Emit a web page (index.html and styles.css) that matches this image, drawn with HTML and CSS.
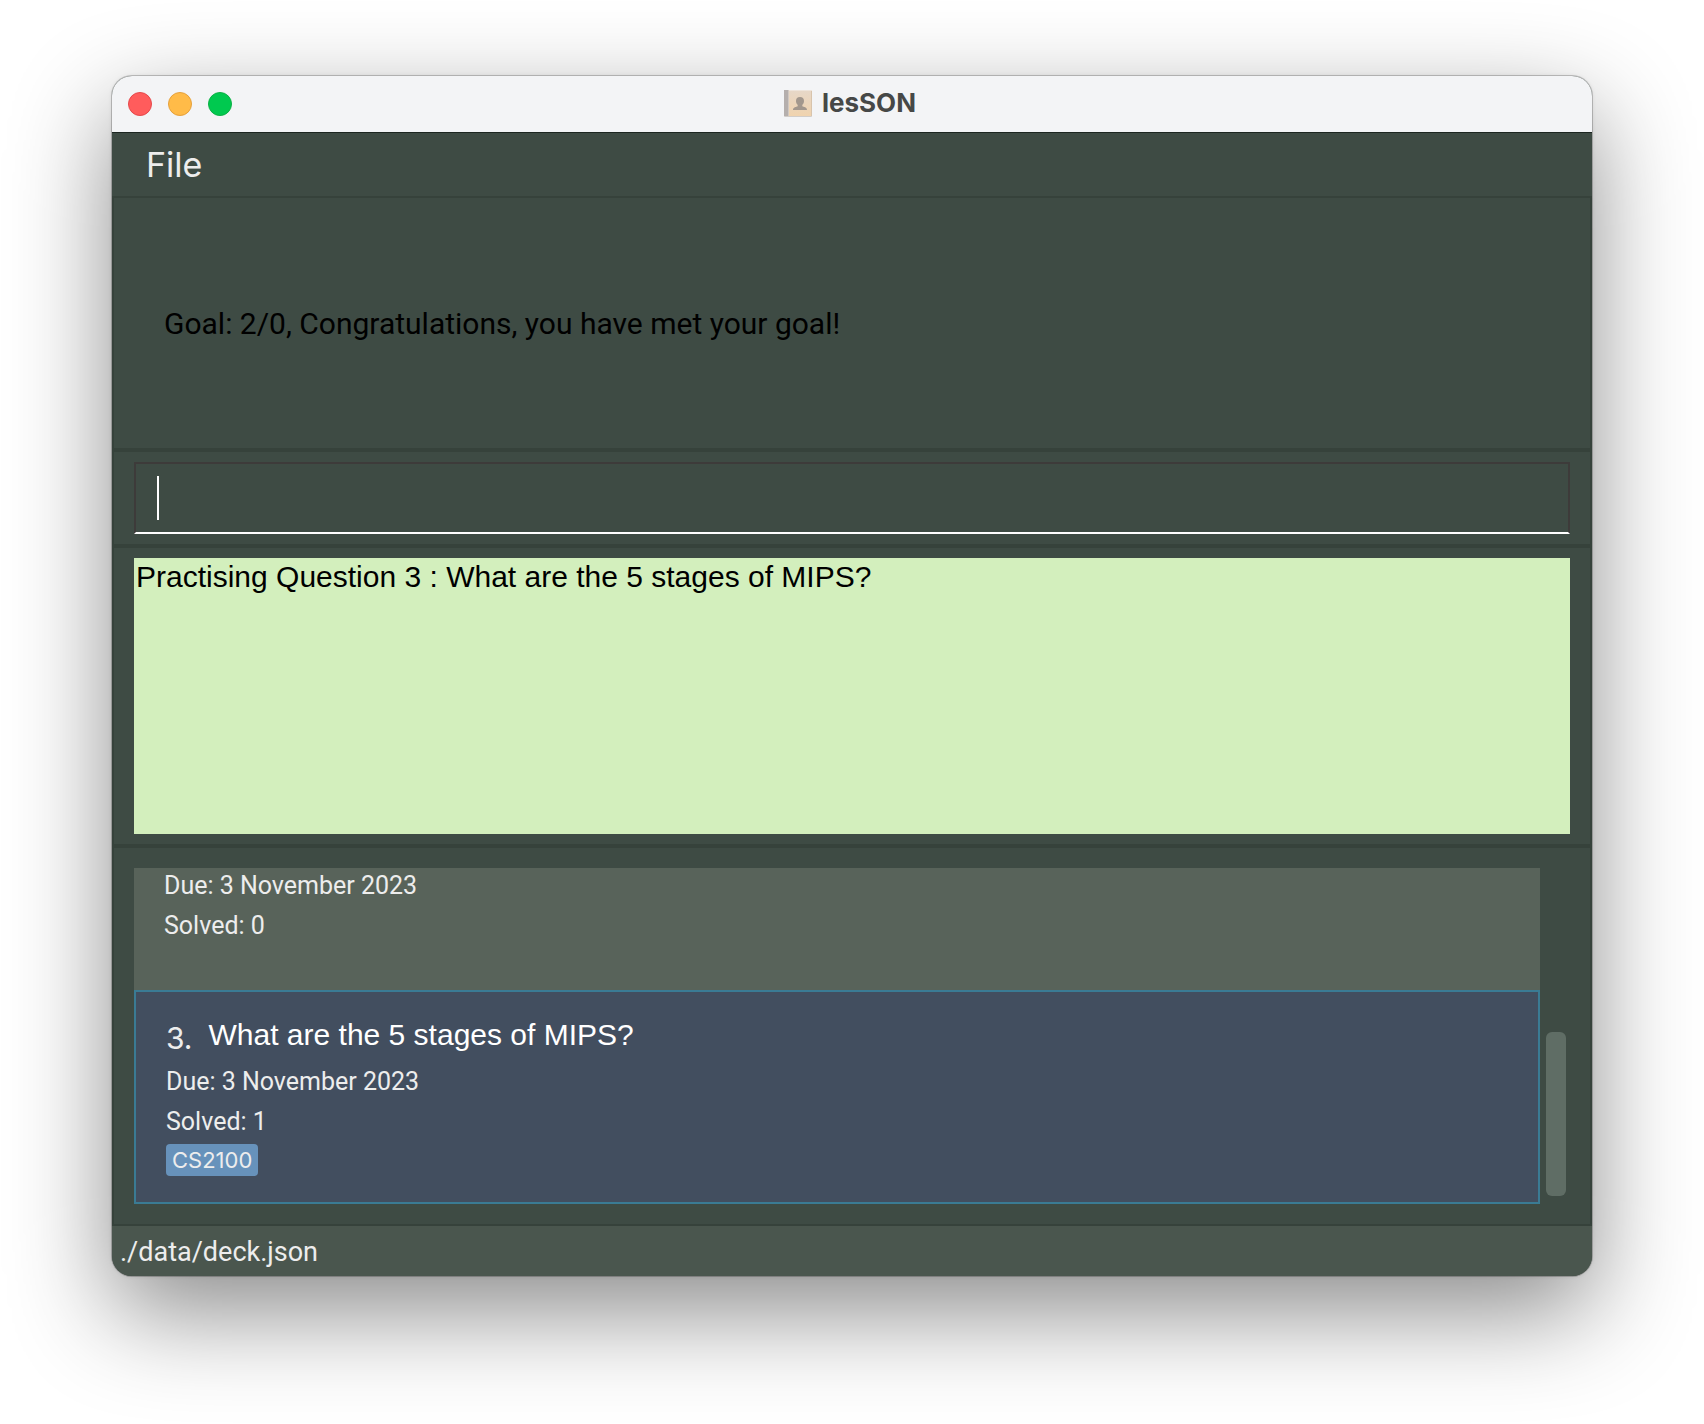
FILE: index.html
```html
<!DOCTYPE html>
<html lang="en">
<head>
<meta charset="utf-8">
<meta name="viewport" content="width=device-width, initial-scale=1">
<title>lesSON</title>
<link rel="stylesheet" href="styles.css">
</head>
<body>
<div class="window">
  <header class="titlebar">
    <div class="lights">
      <button class="light light-close" type="button" aria-label="Close"></button>
      <button class="light light-minimize" type="button" aria-label="Minimize"></button>
      <button class="light light-zoom" type="button" aria-label="Zoom"></button>
    </div>
    <h1 class="title">
      <svg class="title-icon" width="30" height="28" viewBox="0 0 30 28" aria-hidden="true">
        <defs>
          <linearGradient id="cover" x1="0" y1="0" x2="0" y2="1">
            <stop offset="0" stop-color="#e6d7c8"/>
            <stop offset="1" stop-color="#f0d3ae"/>
          </linearGradient>
        </defs>
        <rect x="0" y="2" width="28" height="26" rx="1" fill="#d2cdc8"/>
        <rect x="0" y="1" width="28" height="26" rx="1" fill="url(#cover)"/>
        <rect x="0" y="1" width="4" height="26" fill="#b5afad"/>
        <rect x="4" y="1" width="1" height="26" fill="#d0c8c2"/>
        <path d="M5 1.500H28" stroke="#eee4da"/>
        <path d="M27.500 2V27" stroke="#d8c4ac"/>
        <path d="M16 8c-2.700 0-4 1.600-4 3.900 0 1.900.7 3 1.700 3.900v1.400c-1.400.7-4.700.9-4.700 3.800h14c0-2.900-3.300-3.100-4.700-3.800v-1.400c1-.9 1.700-2 1.700-3.900C20 9.600 18.700 8 16 8z" fill="#a2978d"/>
      </svg>
      <span>lesSON</span>
    </h1>
  </header>
  <nav class="menubar"><button class="menu" type="button">File</button></nav>
  <main class="content">
    <section class="goal"><p>Goal: 2/0, Congratulations, you have met your goal!</p></section>
    <section class="panel command">
      <input class="command-input" type="text" aria-label="Command">
      <span class="caret"></span>
    </section>
    <section class="panel result">
      <textarea class="result-text" aria-label="Result" readonly>Practising Question 3 : What are the 5 stages of MIPS?</textarea>
    </section>
    <section class="deck">
      <ul class="cards">
        <li class="card card-scrolled">
          <p class="detail">Due: 3 November 2023</p>
          <p class="detail">Solved: 0</p>
        </li>
        <li class="card card-selected">
          <div class="question"><span class="index">3.</span><h2 class="question-text">What are the 5 stages of MIPS?</h2></div>
          <p class="detail">Due: 3 November 2023</p>
          <p class="detail">Solved: 1</p>
          <span class="tag">CS2100</span>
        </li>
      </ul>
      <div class="scrollbar"><div class="thumb"></div></div>
    </section>
  </main>
  <footer class="status">./data/deck.json</footer>
</div>
</body>
</html>
```
FILE: styles.css
```css
* { box-sizing: border-box; }

body {
  display: flex;
  min-height: 100vh;
  margin: 0;
  padding: 76px 112px 148px;
  background: #fff;
  color: #ededed;
  font-family: Roboto, "Liberation Sans", sans-serif;
}

h1, h2, p, ul { margin: 0; padding: 0; font-weight: 400; }

.window {
  display: flex;
  flex: 1;
  flex-direction: column;
  min-width: 0;
  overflow: hidden;
  border-radius: 20px;
  background: #3e4b44;
  box-shadow: 0 0 0 1px rgba(0, 0, 0, .2), 0 0 4px rgba(0, 0, 0, .1), 0 36px 100px rgba(0, 0, 0, .46);
}

.titlebar {
  display: grid;
  grid-template-columns: 1fr auto 1fr;
  align-items: center;
  height: 57px;
  padding: 0 16px;
  border-bottom: 1px solid #1c2621;
  background: #f3f4f6;
}

.lights { display: flex; gap: 16px; }
.light { width: 24px; height: 24px; padding: 0; border: 1px solid; border-radius: 50%; }
.light-close { border-color: #e5484b; background: #ff5c5c; }
.light-minimize { border-color: #e5a03c; background: #ffbb48; }
.light-zoom { border-color: #0cb045; background: #00c94f; }

.title {
  display: flex;
  align-items: center;
  gap: 8px;
  padding: 0 4px 2px 0;
  color: #464847;
  font: 700 26px/32px Inter, "Liberation Sans", sans-serif;
}

.menubar { display: flex; height: 65px; padding: 0 34px; border-bottom: 2px solid #36423b; }
.menu { padding: 0; border: 0; background: none; color: #ededed; font: 400 34px/63px Inter, "Liberation Sans", sans-serif; }

.content { display: flex; flex: 1; flex-direction: column; border: solid #36423b; border-width: 0 2px 2px; }

.goal {
  display: flex;
  flex: 1;
  align-items: center;
  min-height: 120px;
  padding: 2px 50px 0;
  color: #000;
  font-size: 30px;
  line-height: 36px;
}

.panel { position: relative; padding: 10px 20px; border-top: 4px solid #36423b; }

.command-input {
  display: block;
  width: 100%;
  height: 72px;
  padding: 0 22px;
  border: 2px solid #3d3b3a;
  border-bottom-color: #fff;
  border-radius: 0;
  outline: 0;
  background: none;
  color: #fff;
  font: inherit;
  font-size: 30px;
}

.caret { position: absolute; top: 24px; left: 43px; width: 2px; height: 44px; background: #fff; }

.result-text {
  display: block;
  width: 100%;
  height: 276px;
  padding: 2px;
  border: 0;
  outline: 0;
  resize: none;
  background: #d3efbd;
  color: #000;
  font: 30px/34px "Liberation Sans", Arial, sans-serif;
}

.deck { display: flex; padding: 20px; border-top: 4px solid #36423b; }
.cards { flex: 1; min-width: 0; list-style: none; }
.card { padding: 0 30px; }
.card-scrolled { height: 122px; background: #58635a; }
.card-selected { height: 214px; padding: 22px 30px; border: 2px solid #3a7b94; background: #424e5f; }

.detail { padding-bottom: 4px; font-size: 25px; line-height: 36px; }
.question { display: flex; gap: 16px; height: 50px; align-items: flex-start; }
.index { padding-top: 2px; font: 30px/44px Inter, "Liberation Sans", sans-serif; }
.question-text { color: #fff; font: 30px/42px "Liberation Sans", Arial, sans-serif; }

.tag {
  display: block;
  width: max-content;
  padding: 0 6px;
  border-radius: 4px;
  background: #6792bb;
  font: 22px/32px Inter, "Liberation Sans", sans-serif;
}

.scrollbar { display: flex; flex-direction: column; justify-content: flex-end; width: 30px; padding: 8px 4px 8px 6px; }
.thumb { height: 164px; border-radius: 6px; background: #5f6d65; }

.status { height: 50px; padding: 0 8px; background: #4a564e; font-size: 27px; line-height: 52px; }
```
